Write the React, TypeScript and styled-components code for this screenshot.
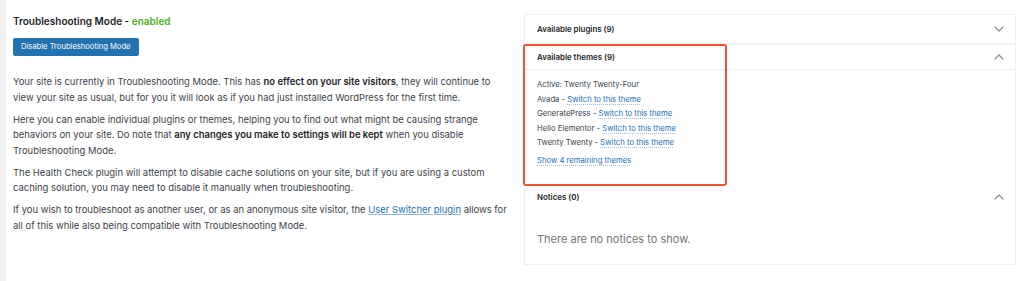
import styled, { createGlobalStyle } from 'styled-components';

const Global = createGlobalStyle`
  html, body { margin: 0; padding: 0; background: #fff; }
  body {
    font-family: 'Inter', 'Liberation Sans', sans-serif;
    color: #1d2327;
    -webkit-font-smoothing: antialiased;
  }
`;

const themes = [
  { name: 'Avada' },
  { name: 'GeneratePress' },
  { name: 'Hello Elementor' },
  { name: 'Twenty Twenty' },
];

const Chevron = ({ up }: { up?: boolean }) => (
  <svg width="10" height="6" viewBox="0 0 10 6" fill="none" stroke="#8c8f94" strokeWidth="1.2" strokeLinecap="round" strokeLinejoin="round">
    {up ? <polyline points="1,5 5,1 9,5" /> : <polyline points="1,1 5,5 9,1" />}
  </svg>
);

export default function App() {
  return (
    <>
      <Global />
      <Page>
        <Edge />
        <Main>
          <Title>
            Troubleshooting Mode - <Enabled>enabled</Enabled>
          </Title>
          <Button>Disable Troubleshooting Mode</Button>

          <Para>
            Your site is currently in Troubleshooting Mode. This has <b>no effect on your site visitors</b>, they will continue to<br />
            view your site as usual, but for you it will look as if you had just installed WordPress for the first time.
          </Para>
          <Para>
            Here you can enable individual plugins or themes, helping you to find out what might be causing strange<br />
            behaviors on your site. Do note that <b>any changes you make to settings will be kept</b> when you disable<br />
            Troubleshooting Mode.
          </Para>
          <Para>
            The Health Check plugin will attempt to disable cache solutions on your site, but if you are using a custom<br />
            caching solution, you may need to disable it manually when troubleshooting.
          </Para>
          <Para>
            If you wish to troubleshoot as another user, or as an anonymous site visitor, the <Link href="#">User Switcher plugin</Link> allows for<br />
            all of this while also being compatible with Troubleshooting Mode.
          </Para>
        </Main>

        <Side>
          <Panel>
            <Section>
              <Header>
                <HeaderTitle>Available plugins (9)</HeaderTitle>
                <Chevron />
              </Header>
            </Section>

            <Section>
              <Header $open>
                <HeaderTitle>Available themes (9)</HeaderTitle>
                <Chevron up />
              </Header>
              <ThemeList>
                <ThemeRow>Active: Twenty Twenty-Four</ThemeRow>
                {themes.map(t => (
                  <ThemeRow key={t.name}>
                    {t.name} - <SmallLink href="#">Switch to this theme</SmallLink>
                  </ThemeRow>
                ))}
                <MoreRow>
                  <SmallLink href="#">Show 4 remaining themes</SmallLink>
                </MoreRow>
              </ThemeList>
              <Highlight />
            </Section>

            <Section>
              <Header $flat>
                <HeaderTitle>Notices (0)</HeaderTitle>
                <Chevron up />
              </Header>
              <Empty>There are no notices to show.</Empty>
            </Section>
          </Panel>
        </Side>
      </Page>
    </>
  );
}

/* ═══ Layout ═══ */

const Page = styled.div`
  display: flex;
  width: 1024px;
  height: 281px;
  overflow: hidden;
  background: #fff;
`;

const Edge = styled.div`
  width: 6px;
  flex-shrink: 0;
  background: #f0f0f1;
`;

const Main = styled.div`
  width: 518px;
  flex-shrink: 0;
  padding: 14px 0 0 7px;
  box-sizing: border-box;
`;

const Side = styled.div`
  width: 492px;
  flex-shrink: 0;
  padding-top: 14px;
`;

/* ═══ Left column ═══ */

const Title = styled.h2`
  margin: 0;
  font-size: 10px;
  line-height: 15px;
  font-weight: 600;
  color: #1d2327;
`;

const Enabled = styled.span`
  color: #4ab11b;
`;

const Button = styled.button`
  display: block;
  margin: 9px 0 18px;
  height: 18px;
  padding: 0 7px;
  background: #2271b1;
  border: 1px solid #2271b1;
  border-radius: 2px;
  color: #fff;
  font-family: inherit;
  font-size: 7.6px;
  line-height: 16px;
`;

const Para = styled.p`
  margin: 0 0 6.5px;
  white-space: nowrap;
  font-size: 9.45px;
  line-height: 15.5px;
  color: #3c434a;

  b { font-weight: 600; color: #1d2327; }
`;

const Link = styled.a`
  color: #2271b1;
  text-decoration: underline;
  text-decoration-color: #8fb6d8;
`;

/* ═══ Accordion ═══ */

const Panel = styled.div`
  position: relative;
  width: 492px;
  height: 251px;
  box-sizing: border-box;
  border: 1px solid #f0f0f1;
  background: #fff;
`;

const Section = styled.div`
  position: relative;
`;

const Header = styled.div<{ $open?: boolean; $flat?: boolean }>`
  display: flex;
  align-items: center;
  justify-content: space-between;
  height: ${p => (p.$flat ? '24px' : p.$open ? '24px' : '28px')};
  padding: 0 11px 0 12px;
  border-bottom: ${p => (p.$flat ? 'none' : p.$open ? '1px solid #ededee' : '2px solid #f3f3f4')};
`;

const HeaderTitle = styled.span`
  font-size: 7.9px;
  font-weight: 600;
  color: #1d2327;
`;

const ThemeList = styled.div`
  padding: 8px 12px 16px;
`;

const ThemeRow = styled.div`
  font-size: 7.7px;
  line-height: 14.6px;
  color: #3c434a;
`;

const MoreRow = styled.div`
  margin-top: 3px;
  font-size: 7.7px;
  line-height: 14.6px;
`;

const SmallLink = styled.a`
  color: #2271b1;
  text-decoration: underline dotted;
  text-decoration-color: #9cc0de;
  text-underline-offset: 1.5px;
`;

const Highlight = styled.div`
  position: absolute;
  left: -2px;
  top: -1px;
  width: 204px;
  height: 142px;
  box-sizing: border-box;
  border: 2px solid #f0553a;
  border-radius: 3px;
  pointer-events: none;
`;

const Empty = styled.div`
  padding: 23px 12px 0;
  font-size: 11px;
  color: #757575;
`;
